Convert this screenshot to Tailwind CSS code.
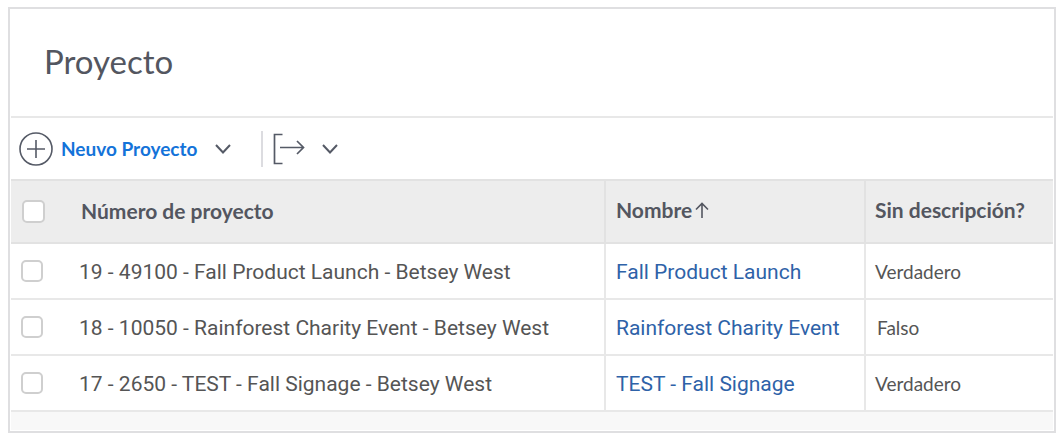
<!DOCTYPE html>
<html lang="es">
<head>
<meta charset="utf-8">
<meta name="viewport" content="width=device-width, initial-scale=1">
<title>Proyecto</title>
<script src="https://cdn.jsdelivr.net/npm/@tailwindcss/browser@4"></script>
</head>
<body class="bg-white pt-[7px] pr-2 pl-2 font-['Lato',sans-serif] text-[#555]">
<main class="border-2 border-[#dfdfe1] px-px pb-px">
  <header class="flex h-[109px] items-center border-b-2 border-[#e8e8e8] px-[33px] pb-1">
    <h1 class="text-[33px] leading-10 text-[#535660]">Proyecto</h1>
  </header>
  <div class="flex h-[61px] items-center pl-2">
    <button type="button" class="flex items-center gap-2 text-[#1473d9]">
      <svg class="size-[34px] text-[#555a66]" viewBox="0 0 34 34" fill="none" stroke="currentColor" stroke-width="1.6" aria-hidden="true"><circle cx="17" cy="17" r="16"/><path d="M17 8v18M8 17h18"/></svg>
      <span class="text-[19px] leading-6 font-bold">Neuvo Proyecto</span>
    </button>
    <button type="button" class="ml-[17px] text-[#555a66]" aria-label="Opciones de nuevo proyecto">
      <svg class="h-3 w-[18px]" viewBox="0 0 18 12" fill="none" stroke="currentColor" stroke-width="2" aria-hidden="true"><path d="M2 2l7 7.500 7-7.500"/></svg>
    </button>
    <span class="ml-[29px] h-9 w-0.5 bg-[#dcdce0]"></span>
    <button type="button" class="ml-2.5 flex items-center gap-4 text-[#555a66]" aria-label="Exportar">
      <svg class="h-8 w-8" viewBox="0 0 32 32" fill="none" stroke="currentColor" stroke-width="1.7" aria-hidden="true"><path d="M9.500 1.500H1.500v29h8M7 14.500h23M24 8l6.500 6.500L24 21"/></svg>
      <svg class="h-3 w-[18px]" viewBox="0 0 18 12" fill="none" stroke="currentColor" stroke-width="2" aria-hidden="true"><path d="M2 2l7 7.500 7-7.500"/></svg>
    </button>
  </div>
  <table class="w-full table-fixed border-separate border-spacing-0 text-left">
    <colgroup><col class="w-[57px]"><col class="w-[538px]"><col class="w-[260px]"><col></colgroup>
    <thead class="bg-[#ededed] text-[21px] leading-6 text-[#535660]">
      <tr class="h-[65px]">
        <th class="border-y-2 border-[#e2e2e2] pl-[11px]"><input type="checkbox" aria-label="Seleccionar todo" class="block size-[23px] appearance-none rounded-[5px] border-2 border-[#cfcfcf] bg-white"></th>
        <th class="border-y-2 border-r-2 border-[#e2e2e2] pb-0.5 pl-[13px] font-bold">Número de proyecto</th>
        <th class="border-y-2 border-r-2 border-[#e2e2e2] pb-1 pl-2.5 font-bold"><button type="button" class="flex items-center gap-[3px]">Nombre<svg class="h-[18px] w-[14px]" viewBox="0 0 14 18" fill="none" stroke="currentColor" stroke-width="1.6" aria-hidden="true"><path d="M7 17V2.500M1 8.500l6-6 6 6"/></svg></button></th>
        <th class="border-y-2 border-[#e2e2e2] pb-1 pl-[9px] font-bold">Sin descripción?</th>
      </tr>
    </thead>
    <tbody class="text-[19px] leading-6">
      <tr class="h-14">
        <td class="border-b-2 border-[#e8e8e8] pl-[10px]"><input type="checkbox" aria-label="Seleccionar 19 - 49100" class="block size-[22px] appearance-none rounded-[5px] border-2 border-[#cfcfcf] bg-white"></td>
        <td class="border-r-2 border-b-2 border-[#e8e8e8] pt-0.5 pl-[11px] font-['Roboto',sans-serif] text-[21px]">19 - 49100 - Fall Product Launch - Betsey West</td>
        <td class="border-r-2 border-b-2 border-[#e8e8e8] pt-0.5 pl-2.5 font-['Roboto',sans-serif] text-[21px]"><a href="#" class="text-[#2e62a8]">Fall Product Launch</a></td>
        <td class="border-b-2 border-[#e8e8e8] pt-0.5 pl-[9px]">Verdadero</td>
      </tr>
      <tr class="h-14">
        <td class="border-b-2 border-[#e8e8e8] pl-[10px]"><input type="checkbox" aria-label="Seleccionar 18 - 10050" class="block size-[22px] appearance-none rounded-[5px] border-2 border-[#cfcfcf] bg-white"></td>
        <td class="border-r-2 border-b-2 border-[#e8e8e8] pt-0.5 pl-[11px] font-['Roboto',sans-serif] text-[21px]">18 - 10050 - Rainforest Charity Event - Betsey West</td>
        <td class="border-r-2 border-b-2 border-[#e8e8e8] pt-0.5 pl-2.5 font-['Roboto',sans-serif] text-[21px]"><a href="#" class="text-[#2e62a8]">Rainforest Charity Event</a></td>
        <td class="border-b-2 border-[#e8e8e8] pt-0.5 pl-[11px]">Falso</td>
      </tr>
      <tr class="h-14">
        <td class="border-b-2 border-[#e8e8e8] pl-[10px]"><input type="checkbox" aria-label="Seleccionar 17 - 2650" class="block size-[22px] appearance-none rounded-[5px] border-2 border-[#cfcfcf] bg-white"></td>
        <td class="border-r-2 border-b-2 border-[#e8e8e8] pt-0.5 pl-[11px] font-['Roboto',sans-serif] text-[21px]">17 - 2650 - TEST - Fall Signage - Betsey West</td>
        <td class="border-r-2 border-b-2 border-[#e8e8e8] pt-0.5 pl-2.5 font-['Roboto',sans-serif] text-[21px]"><a href="#" class="text-[#2e62a8]">TEST - Fall Signage</a></td>
        <td class="border-b-2 border-[#e8e8e8] pt-0.5 pl-[9px]">Verdadero</td>
      </tr>
    </tbody>
  </table>
  <div class="h-[18px] bg-[#f8f8f8]"></div>
</main>
</body>
</html>
